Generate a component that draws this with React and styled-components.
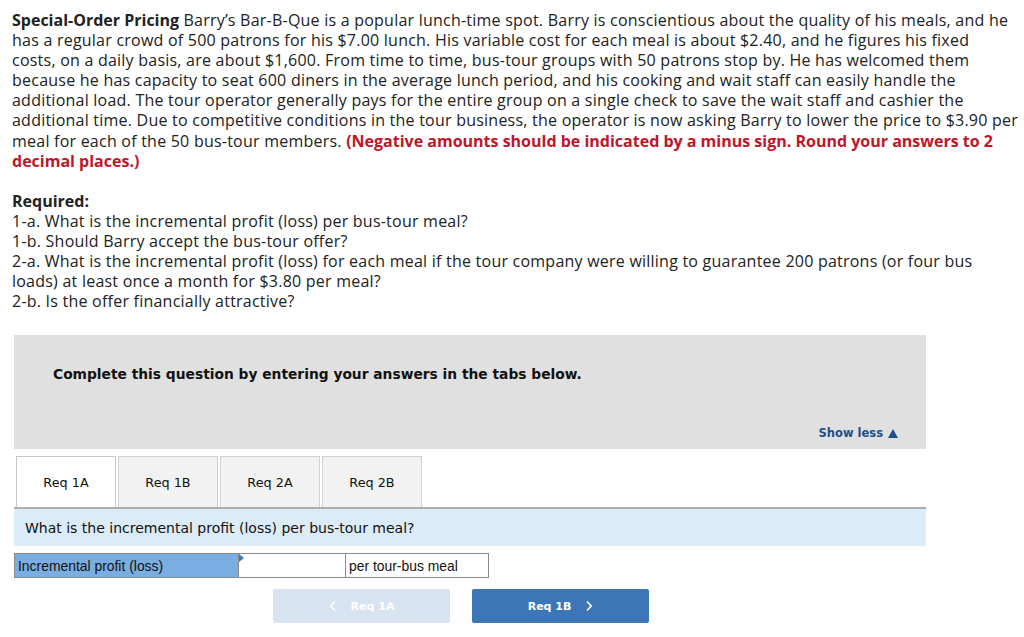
import React from "react";
import styled, { createGlobalStyle } from "styled-components";

const Global = createGlobalStyle`
  html, body { margin: 0; padding: 0; background: #fff; }
  body { font-family: "Open Sans", sans-serif; color: #222; }
`;

const Page = styled.div`
  padding: 10px 12px 0 12px;
  width: 1024px;
  box-sizing: border-box;
`;

const Para = styled.p`
  margin: 0 0 20px 0;
  font-family: "Open Sans", sans-serif;
  font-size: 16px;
  letter-spacing: 0.23px;
  line-height: 20.1px;
  color: #222;
  white-space: nowrap;
  font-variant-ligatures: none;
`;

const Bold = styled.b`
  font-weight: 700;
  letter-spacing: 0;
  color: ${(p) => (p.$red ? "#c0152a" : "#222")};
`;

const Panel = styled.div`
  margin: 24px 0 0 2px;
  width: 912px;
`;

const Instruction = styled.div`
  background: #e0e0e0;
  height: 114px;
  box-sizing: border-box;
  padding: 31px 28px 9px 39px;
  display: flex;
  flex-direction: column;
  justify-content: space-between;
`;

const InstrText = styled.div`
  font-family: "DejaVu Sans", Verdana, sans-serif;
  font-weight: 700;
  font-size: 13.8px;
  color: #111;
`;

const ShowLess = styled.div`
  align-self: flex-end;
  font-family: "DejaVu Sans", Verdana, sans-serif;
  font-weight: 700;
  font-size: 11.5px;
  color: #1d4f8a;
  display: flex;
  align-items: center;
  gap: 5px;
`;

const Tabs = styled.div`
  display: flex;
  gap: 2px;
  margin-top: 7px;
  padding-left: 2px;
  border-bottom: 2px solid #adadad;
`;

const Tab = styled.div`
  width: 100px;
  height: 51px;
  box-sizing: border-box;
  border: 1px solid ${(p) => (p.$active ? "#c8c8c8" : "#d2d2d2")};
  border-bottom: none;
  background: ${(p) => (p.$active ? "#fff" : "#f2f2f2")};
  display: flex;
  align-items: center;
  justify-content: center;
  font-family: "DejaVu Sans", Verdana, sans-serif;
  font-size: 12.8px;
  color: #111;
`;

const QuestionBar = styled.div`
  background: #dbebf7;
  height: 37px;
  display: flex;
  align-items: center;
  padding-left: 11px;
  font-family: "DejaVu Sans", Verdana, sans-serif;
  font-size: 14px;
  color: #111;
`;

const Row = styled.div`
  display: grid;
  grid-template-columns: 223px 107px 1fr;
  margin-top: 7px;
  width: 475px;
  height: 25px;
  border: 1px solid #8a8a8a;
  box-sizing: border-box;
`;

const Cell = styled.div`
  position: relative;
  display: flex;
  align-items: center;
  padding-left: 3px;
  font-family: "Liberation Sans", Arial, sans-serif;
  font-size: 13.9px;
  color: #111;
  background: ${(p) => (p.$label ? "#7aaee2" : "#fff")};
  border-left: ${(p) => (p.$first ? "none" : "1px solid #8a8a8a")};
`;

const Marker = styled.span`
  position: absolute;
  left: 0;
  top: 0;
  width: 0;
  height: 0;
  border-top: 4px solid transparent;
  border-bottom: 4px solid transparent;
  border-left: 5px solid #3d78c0;
`;

const Nav = styled.div`
  display: flex;
  gap: 22px;
  margin: 11px 0 0 259px;
`;

const NavButton = styled.div`
  width: 177px;
  height: 34px;
  border-radius: 2px;
  background: ${(p) => (p.$disabled ? "#d7e3f0" : "#3d76b6")};
  color: #fff;
  display: flex;
  align-items: center;
  justify-content: center;
  gap: 14px;
  font-family: "DejaVu Sans", Verdana, sans-serif;
  font-weight: 700;
  font-size: 11px;
`;

const Chevron = ({ dir }) => (
  <svg width="8" height="12" viewBox="0 0 8 12">
    <path
      d={dir === "left" ? "M6 1.5 L1.8 6 L6 10.5" : "M2 1.5 L6.2 6 L2 10.5"}
      fill="none"
      stroke="#fff"
      strokeWidth="1.6"
    />
  </svg>
);

export default function App() {
  return (
    <>
      <Global />
      <Page>
        <Para>
          <Bold>Special-Order Pricing</Bold> Barry’s Bar-B-Que is a popular lunch-time spot. Barry is conscientious about the quality of his meals, and he
          <br />
          has a regular crowd of 500 patrons for his $7.00 lunch. His variable cost for each meal is about $2.40, and he figures his fixed
          <br />
          costs, on a daily basis, are about $1,600. From time to time, bus-tour groups with 50 patrons stop by. He has welcomed them
          <br />
          because he has capacity to seat 600 diners in the average lunch period, and his cooking and wait staff can easily handle the
          <br />
          additional load. The tour operator generally pays for the entire group on a single check to save the wait staff and cashier the
          <br />
          additional time. Due to competitive conditions in the tour business, the operator is now asking Barry to lower the price to $3.90 per
          <br />
          meal for each of the 50 bus-tour members.{" "}
          <Bold $red>(Negative amounts should be indicated by a minus sign. Round your answers to 2</Bold>
          <br />
          <Bold $red>decimal places.)</Bold>
        </Para>
        <Para>
          <Bold>Required:</Bold>
          <br />
          1-a. What is the incremental profit (loss) per bus-tour meal?
          <br />
          1-b. Should Barry accept the bus-tour offer?
          <br />
          2-a. What is the incremental profit (loss) for each meal if the tour company were willing to guarantee 200 patrons (or four bus
          <br />
          loads) at least once a month for $3.80 per meal?
          <br />
          2-b. Is the offer financially attractive?
        </Para>

        <Panel>
          <Instruction>
            <InstrText>Complete this question by entering your answers in the tabs below.</InstrText>
            <ShowLess>
              Show less
              <svg width="10" height="9" viewBox="0 0 10 9">
                <path d="M5 0 L10 9 L0 9 Z" fill="#1d4f8a" />
              </svg>
            </ShowLess>
          </Instruction>

          <Tabs>
            <Tab $active>Req 1A</Tab>
            <Tab>Req 1B</Tab>
            <Tab>Req 2A</Tab>
            <Tab>Req 2B</Tab>
          </Tabs>

          <QuestionBar>What is the incremental profit (loss) per bus-tour meal?</QuestionBar>

          <Row>
            <Cell $label $first>Incremental profit (loss)</Cell>
            <Cell>
              <Marker />
            </Cell>
            <Cell>per tour-bus meal</Cell>
          </Row>

          <Nav>
            <NavButton $disabled>
              <Chevron dir="left" />
              <span>Req 1A</span>
            </NavButton>
            <NavButton>
              <span>Req 1B</span>
              <Chevron dir="right" />
            </NavButton>
          </Nav>
        </Panel>
      </Page>
    </>
  );
}
